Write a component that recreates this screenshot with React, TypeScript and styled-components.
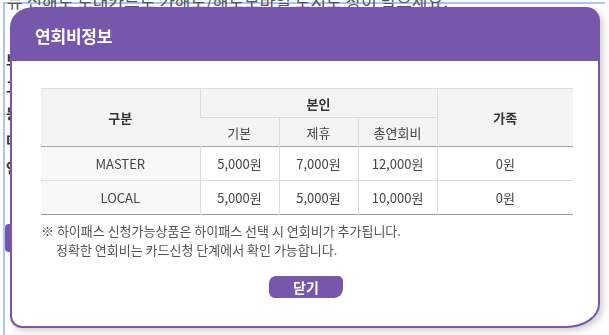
import React from "react";
import styled, { createGlobalStyle } from "styled-components";

const GlobalStyle = createGlobalStyle`
  html, body { margin: 0; padding: 0; background: #fff; }
  body { font-family: "Noto Sans CJK KR", "Noto Sans", sans-serif; overflow: hidden; }
`;

const PURPLE = "#7757ab";

const Page = styled.div`
  position: relative;
  width: 609px;
  height: 335px;
  overflow: hidden;
  background: #fff;
`;

const Frame = styled.div`
  margin: 2px 0 0 3px;
  height: 340px;
  border-top: 2px solid #a9c6f6;
  border-left: 2px solid #a9c6f6;
  width: 600px;
`;

const TopText = styled.div`
  margin-top: -14px;
  padding-left: 2px;
  font-size: 17px;
  line-height: 22px;
  color: #555;
  white-space: nowrap;
`;

const BackLines = styled.div`
  display: flex;
  flex-direction: column;
  gap: 9px;
  margin-top: 38px;
  padding-left: 1px;
`;

const BackLine = styled.div`
  font-size: 14px;
  line-height: 18px;
  font-weight: 700;
  color: #333;
  white-space: nowrap;
`;

const BackButton = styled.div`
  margin-top: 48px;
  width: 40px;
  height: 28px;
  background: ${PURPLE};
  border-radius: 4px;
`;

const Modal = styled.div`
  position: absolute;
  left: 10px;
  top: 7px;
  width: 590px;
  height: 321px;
  display: flex;
  flex-direction: column;
  filter: drop-shadow(3px 3px 3px rgba(0, 0, 0, 0.18));
`;

const Header = styled.div`
  height: 54px;
  flex: none;
  background: ${PURPLE};
  border-radius: 24px 14px 0 0 / 20px 14px 0 0;
  display: flex;
  align-items: center;
  padding-left: 25px;
  padding-top: 2px;
  box-sizing: border-box;
  color: #fff;
  font-size: 17px;
  font-weight: 700;
  letter-spacing: -0.2px;
`;

const Body = styled.div`
  flex: 1;
  background: #fff;
  border: 2px solid ${PURPLE};
  border-top: none;
  border-radius: 0 0 34px 12px / 0 0 24px 12px;
  padding: 27px 25px 0 29px;
  display: flex;
  flex-direction: column;
`;

const Table = styled.table`
  width: 532px;
  border-collapse: collapse;
  table-layout: fixed;
  border-top: 1px solid #9a9a9a;
  border-bottom: 1px solid #9a9a9a;
  font-size: 13px;
  color: #444;
`;

const HeadCell = styled.th<{ $bold?: boolean; $h: number }>`
  height: ${(p) => p.$h}px;
  padding: 0;
  background: #f4f4f4;
  font-weight: ${(p) => (p.$bold ? 700 : 400)};
  color: ${(p) => (p.$bold ? "#333" : "#444")};
  font-size: 13px;
  border-left: 1px solid #dcdcdc;
  border-top: 1px solid #dcdcdc;
  text-align: center;
  &:first-child { border-left: none; }
`;

const HeadRow = styled.tr`
  border-bottom: 1px solid #a5a5a5;
`;

const Row = styled.tr`
  & + & { border-top: 1px solid #dcdcdc; }
`;

const Cell = styled.td<{ $label?: boolean }>`
  height: 33px;
  padding: 0;
  text-align: center;
  background: ${(p) => (p.$label ? "#f8f8f8" : "#fff")};
  border-left: 1px solid #dcdcdc;
  &:first-child { border-left: none; }
`;

const Notes = styled.div`
  margin-top: 6px;
  font-size: 13px;
  line-height: 19px;
  color: #555;
`;

const NoteLine = styled.div<{ $indent?: boolean }>`
  padding-left: ${(p) => (p.$indent ? "15px" : "0")};
  white-space: nowrap;
`;

const ButtonRow = styled.div`
  display: flex;
  justify-content: center;
  margin-top: 17px;
  padding-right: 2px;
`;

const CloseButton = styled.button`
  width: 74px;
  height: 22px;
  border: none;
  padding: 0;
  background: ${PURPLE};
  color: #fff;
  font-family: inherit;
  font-size: 14px;
  font-weight: 700;
  border-radius: 7px 5px 9px 6px;
  cursor: pointer;
`;

const rows = [
  { name: "MASTER", basic: "5,000원", partner: "7,000원", total: "12,000원", family: "0원" },
  { name: "LOCAL", basic: "5,000원", partner: "5,000원", total: "10,000원", family: "0원" },
];

export default function App() {
  return (
    <>
      <GlobalStyle />
      <Page>
        <Frame>
          <TopText>뉴 신해로 로대카드로 가해로/해로모바일 토지로 창이 발으세요.</TopText>
          <BackLines>
            <BackLine>브랜드</BackLine>
            <BackLine>고객</BackLine>
            <BackLine>등급</BackLine>
            <BackLine>다음</BackLine>
            <BackLine>연회비</BackLine>
          </BackLines>
          <BackButton />
        </Frame>
        <Modal>
          <Header>연회비정보</Header>
          <Body>
            <Table>
              <colgroup>
                <col style={{ width: 159 }} />
                <col style={{ width: 79 }} />
                <col style={{ width: 79 }} />
                <col style={{ width: 79 }} />
                <col style={{ width: 136 }} />
              </colgroup>
              <thead>
                <tr>
                  <HeadCell $bold $h={28} rowSpan={2}>구분</HeadCell>
                  <HeadCell $bold $h={28} colSpan={3}>본인</HeadCell>
                  <HeadCell $bold $h={28} rowSpan={2}>가족</HeadCell>
                </tr>
                <HeadRow>
                  <HeadCell $h={28}>기본</HeadCell>
                  <HeadCell $h={28}>제휴</HeadCell>
                  <HeadCell $h={28}>총연회비</HeadCell>
                </HeadRow>
              </thead>
              <tbody>
                {rows.map((r) => (
                  <Row key={r.name}>
                    <Cell $label>{r.name}</Cell>
                    <Cell>{r.basic}</Cell>
                    <Cell>{r.partner}</Cell>
                    <Cell>{r.total}</Cell>
                    <Cell>{r.family}</Cell>
                  </Row>
                ))}
              </tbody>
            </Table>
            <Notes>
              <NoteLine>※ 하이패스 신청가능상품은 하이패스 선택 시 연회비가 추가됩니다.</NoteLine>
              <NoteLine $indent>정확한 연회비는 카드신청 단계에서 확인 가능합니다.</NoteLine>
            </Notes>
            <ButtonRow>
              <CloseButton>닫기</CloseButton>
            </ButtonRow>
          </Body>
        </Modal>
      </Page>
    </>
  );
}
